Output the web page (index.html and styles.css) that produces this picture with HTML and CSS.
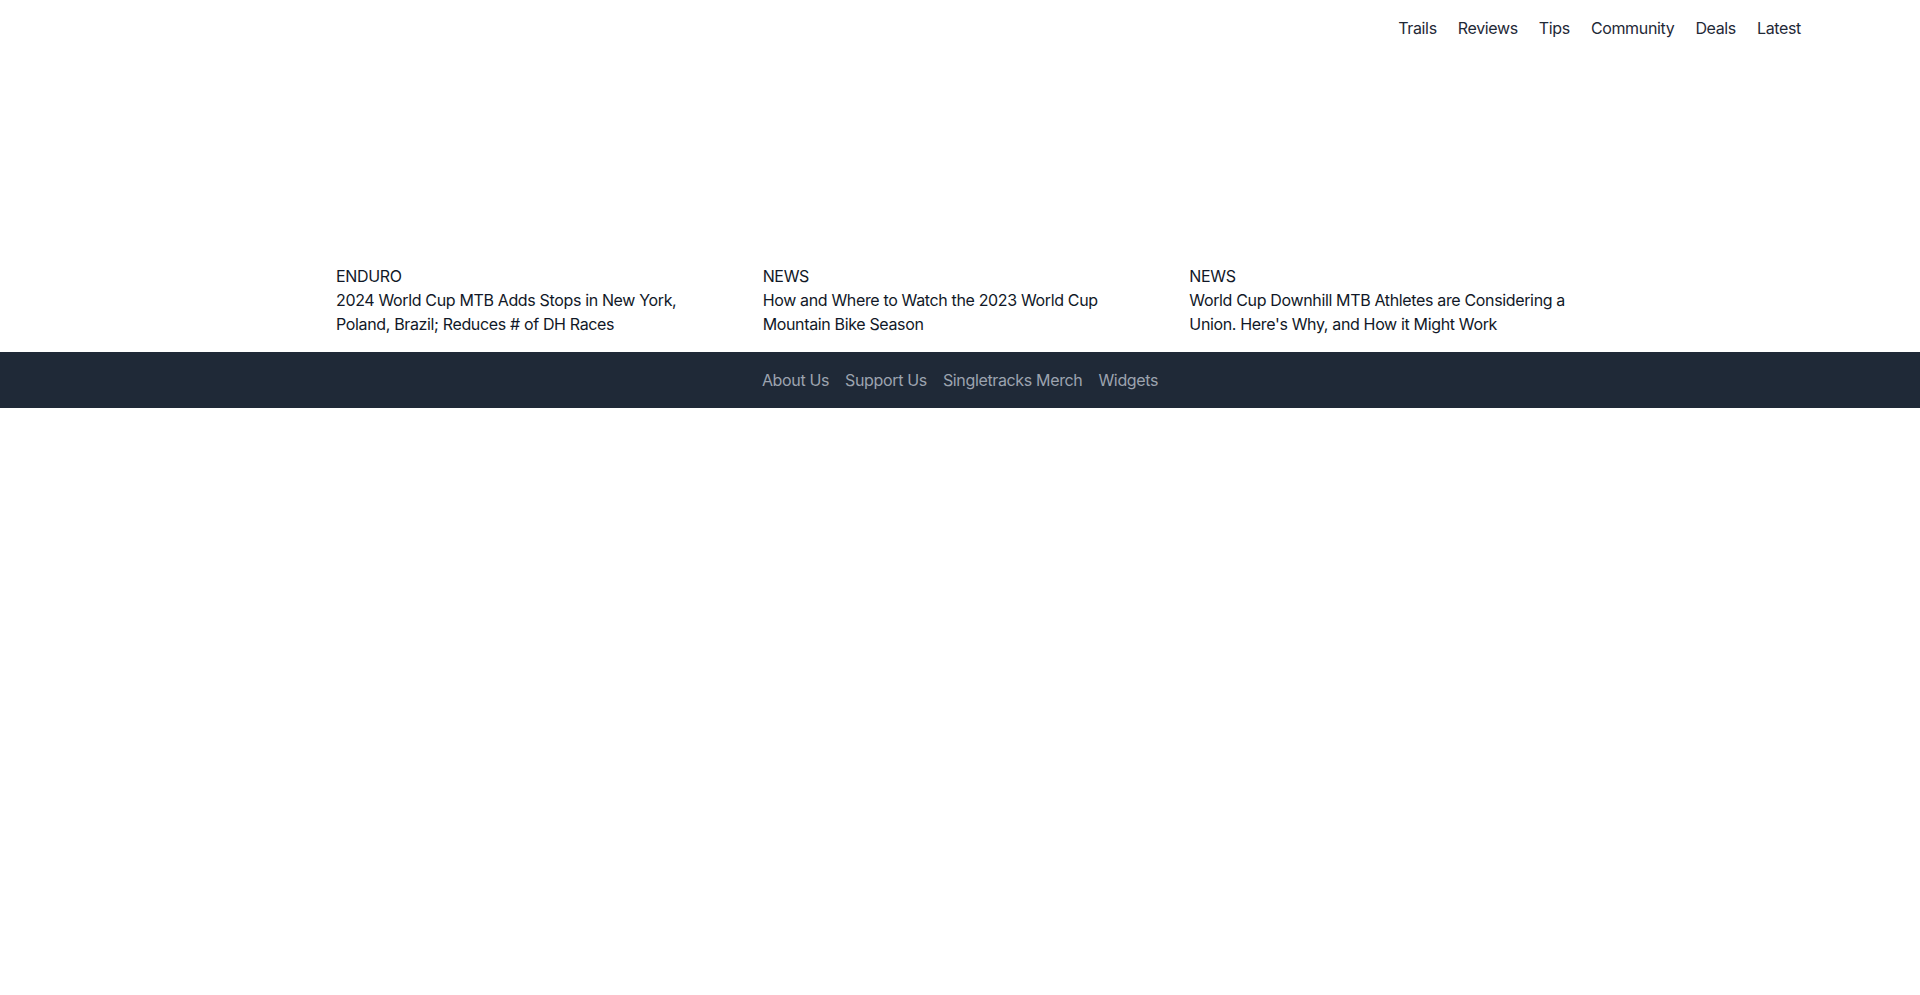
FILE: index.html
```html
<!DOCTYPE html>
<html lang="en">
<head>
<meta charset="utf-8">
<title>Singletracks</title>
<link rel="stylesheet" href="styles.css">
</head>
<body>
<header class="site-header">
  <nav class="main-nav">
    <a href="#">Trails</a>
    <a href="#">Reviews</a>
    <a href="#">Tips</a>
    <a href="#">Community</a>
    <a href="#">Deals</a>
    <a href="#">Latest</a>
  </nav>
</header>
<main class="container">
  <div class="cards">
    <article class="card">
      <div class="card-image"></div>
      <div class="card-cat">ENDURO</div>
      <div class="card-title">2024 World Cup MTB Adds Stops in New York, Poland, Brazil; Reduces # of DH Races</div>
    </article>
    <article class="card">
      <div class="card-image"></div>
      <div class="card-cat">NEWS</div>
      <div class="card-title">How and Where to Watch the 2023 World Cup Mountain Bike Season</div>
    </article>
    <article class="card">
      <div class="card-image"></div>
      <div class="card-cat">NEWS</div>
      <div class="card-title">World Cup Downhill MTB Athletes are Considering a Union. Here's Why, and How it Might Work</div>
    </article>
  </div>
</main>
<footer class="site-footer">
  <a href="#">About Us</a>
  <a href="#">Support Us</a>
  <a href="#">Singletracks Merch</a>
  <a href="#">Widgets</a>
</footer>
</body>
</html>
```

FILE: styles.css
```css
* { box-sizing: border-box; }
html, body { margin: 0; padding: 0; background: #fff; }
body {
  font-family: Inter, "Noto Sans", sans-serif;
  font-size: 16px;
  line-height: 24px;
  letter-spacing: -0.35px;
  color: #111827;
}
a { text-decoration: none; color: inherit; }
.site-header {
  height: 56px;
  display: flex;
  justify-content: flex-end;
  align-items: center;
  padding-right: 119px;
}
.main-nav {
  display: flex;
  gap: 21px;
  color: #1f2937;
}
.container {
  max-width: 1280px;
  margin: 0 auto;
  padding: 0 16px 16px;
}
.cards {
  display: grid;
  grid-template-columns: repeat(3, 1fr);
  gap: 32px;
}
.card-image {
  height: 208px;
}
.card-cat, .card-title { color: #111827; }
.site-footer {
  background: #1f2937;
  height: 56px;
  display: flex;
  justify-content: center;
  align-items: center;
  gap: 16px;
  color: #9ca3af;
}
```
